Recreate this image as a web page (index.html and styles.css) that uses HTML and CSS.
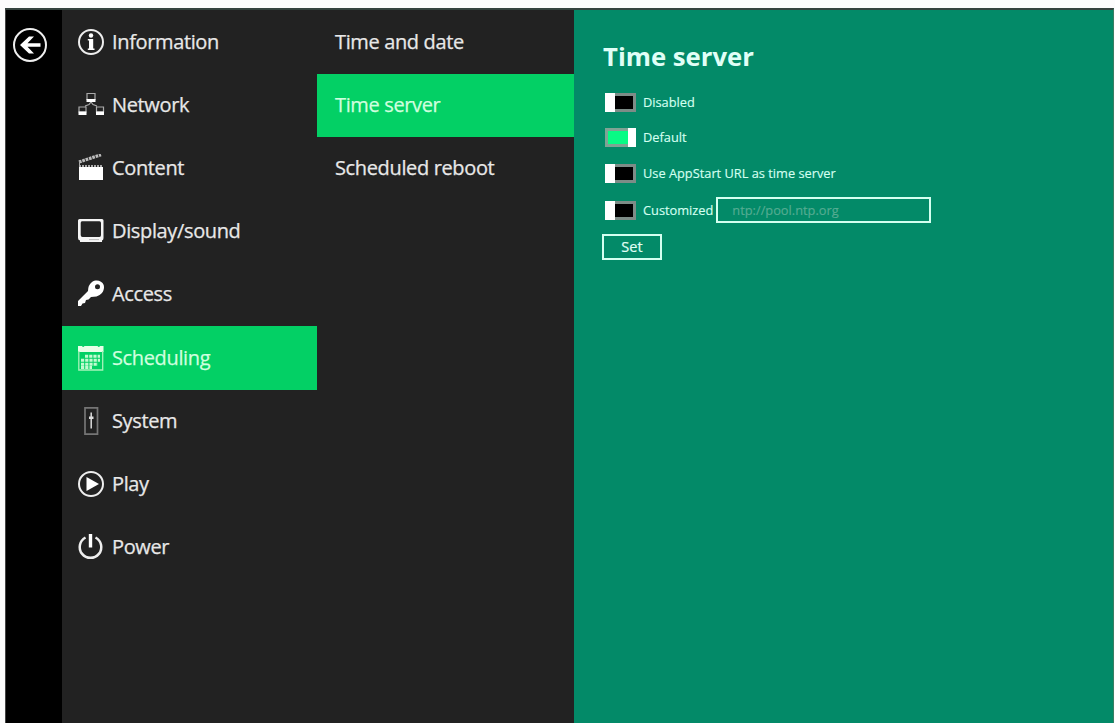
FILE: index.html
```html
<!DOCTYPE html>
<html lang="en">
<head>
<meta charset="utf-8">
<title>Time server</title>
<link rel="stylesheet" href="styles.css">
</head>
<body>
<div class="app">
  <aside class="rail">
    <svg class="back" viewBox="0 0 36 36"><circle cx="18" cy="18" r="16" fill="none" stroke="#eee" stroke-width="2"/><path d="M8 18 17 9.500H22L15.500 16.200H28.500V19.800H15.500L22 26.500H17Z" fill="#fff"/></svg>
  </aside>
  <nav class="menu">
    <a class="item"><svg class="icon" viewBox="0 0 28 28"><circle cx="14" cy="14" r="12" fill="none" stroke="#eee" stroke-width="2"/><circle cx="14" cy="7.500" r="2.200" fill="#fff"/><path d="M10.800 11H16.200V20.500H17.500V22H10.800V20.500H12V12.500H10.800Z" fill="#fff"/></svg><span>Information</span></a>
    <a class="item"><svg class="icon" viewBox="0 0 28 28"><g fill="none" stroke="#aaa" stroke-width="1.200"><path d="M10 2.500H18V8.500H10ZM2 16H9V21H2ZM19.500 16H26.500V21H19.500ZM8 15 12 13.500 14 11 16 13.500 20 15"/></g><path d="M9.500 8H18.500V11H9.500ZM1.500 20.500H9.500V24H1.500ZM19 20.500H27V24H19Z" fill="#fff"/></svg><span>Network</span></a>
    <a class="item"><svg class="icon" viewBox="0 0 28 28"><path d="M2 13H26V26H2Z" fill="#fff"/><path d="M2 12H26" stroke="#aaa" stroke-width="2" stroke-dasharray="2 1"/><path d="M2 8 24 .8" stroke="#bbb" stroke-width="3.200" stroke-dasharray="2.700 .8"/><path d="M2.500 6V12" stroke="#aaa"/></svg><span>Content</span></a>
    <a class="item"><svg class="icon" viewBox="0 0 28 28"><path fill="#f4f4f4" fill-rule="evenodd" d="M2.500 2H25Q26.500 2 26.500 3.500V21Q26.500 23 25 23.500V25H3V23.500Q1 23 1 21V3.500Q1 2 2.500 2ZM5 4.300Q3.700 4.300 3.700 6V18Q3.700 20 5.500 20H22.500Q24 20 24 18V6Q24 4.300 22.500 4.300Z"/><path d="M12 22.600H22" stroke="#aaa" stroke-width=".8"/></svg><span>Display/sound</span></a>
    <a class="item"><svg class="icon" viewBox="0 0 28 28"><path fill="#fff" fill-rule="evenodd" d="M15 2C19-.8 25 .5 26.700 5 28 10 25 15 19.500 16.500L14 17 11.500 19.500 9 20 8 23 5.500 23.500 4 26H1V21L11 11Q11 5 15 2ZM20.500 4.200A2.500 2.500 0 1 0 20.500 9.200A2.500 2.500 0 1 0 20.500 4.200Z"/></svg><span>Access</span></a>
    <a class="item active"><svg class="icon" viewBox="0 0 28 28"><path fill="#e8ffe8" d="M1 2H5Q6 4 7.500 2H20.500Q22 4 23 2H26.500V8H1Z"/><path d="M1.800 7V26H25.700V7" fill="none" stroke="#a8f3ba" stroke-width="1.300"/><path d="M8 12.200H23M4 16.200H23M4 20.200H21M4 23.600H15" stroke="#c2fbd0" stroke-width="3" stroke-dasharray="3.200 1"/></svg><span>Scheduling</span></a>
    <a class="item"><svg class="icon" viewBox="0 0 28 28"><path d="M8 .9H20.500V27.100H8Z" fill="none" stroke="#757575" stroke-width="1.700"/><path d="M14.200 5.500V21.500" stroke="#ddd" stroke-width="1.500"/><path d="M12 9.500H16.500V12H12Z" fill="#ddd"/></svg><span>System</span></a>
    <a class="item"><svg class="icon" viewBox="0 0 28 28"><circle cx="14" cy="14" r="12" fill="none" stroke="#eee" stroke-width="2"/><path d="M9.500 7 22 14 9.500 21Z" fill="#fff"/></svg><span>Play</span></a>
    <a class="item"><svg class="icon" viewBox="0 0 28 28"><path d="M8.500 4.500A10.800 10.800 0 1 0 18.500 4.500" fill="none" stroke="#eee" stroke-width="2.500"/><path d="M13.500 1V14.500" stroke="#fff" stroke-width="3.400"/></svg><span>Power</span></a>
  </nav>
  <nav class="menu submenu">
    <a class="item">Time and date</a>
    <a class="item active">Time server</a>
    <a class="item">Scheduled reboot</a>
  </nav>
  <main class="panel">
    <h1>Time server</h1>
    <div class="option"><i class="toggle"></i><span>Disabled</span></div>
    <div class="option default"><i class="toggle on"></i><span>Default</span></div>
    <div class="option appstart"><i class="toggle"></i><span>Use AppStart URL as time server</span></div>
    <div class="option custom"><i class="toggle"></i><span>Customized</span><input class="url" type="text" placeholder="ntp://pool.ntp.org"></div>
    <button class="set">Set</button>
  </main>
</div>
</body>
</html>
```
FILE: styles.css
```css
* { box-sizing: border-box; }
body {
  margin: 0;
  height: 723px;
  overflow: hidden;
  background: #fcfcfc;
  font-family: "Open Sans", "Noto Sans", sans-serif;
  color: #fff;
}
.app {
  display: flex;
  height: 715px;
  margin: 8px 1px 0 5px;
  border-top: 2px solid #35433e;
  border-left: 1px solid #444;
  border-right: 1px solid #397d63;
  background: #222;
}
.rail { width: 56px; background: #000; padding: 17px 0 0 6px; }
.back { display: block; width: 36px; height: 36px; }
.menu { width: 255px; padding-top: 1px; }
.item {
  display: flex;
  align-items: center;
  height: 63.1px;
  padding: 0 0 1px 15px;
  font-size: 20px;
  letter-spacing: -.36px;
  line-height: 28px;
  color: #e8e8e8;
  -webkit-text-stroke: .25px currentColor;
  white-space: nowrap;
}
.icon { width: 28px; height: 28px; margin-right: 7px; }
.active { background: #03d065; color: #d0ffdf; }
.submenu { width: 257px; }
.submenu .item { padding-left: 18px; }
.panel { flex: 1; background: #038a68; padding: 28px 0 0 29px; }
h1 {
  margin: 0 0 15px;
  font-size: 25.7px;
  line-height: 38px;
  font-weight: 700;
  color: #e0fff7;
}
.option {
  display: flex;
  align-items: center;
  height: 22px;
  padding-left: 2px;
  font-size: 12.8px;
  color: #d4fff0;
  -webkit-text-stroke: .15px currentColor;
  white-space: nowrap;
}
.default { margin-top: 13px; }
.appstart { margin-top: 14px; }
.custom { margin-top: 13px; height: 26px; }
.toggle {
  width: 31px;
  height: 19px;
  margin-right: 7px;
  background: #000;
  border: 3px solid #7d8c87;
  border-left: 10px solid #fff;
  border-image: linear-gradient(to right, #fff 10px, #7d8c87 10px) 3 3 3 10;
}
.toggle.on {
  background: #08fb85;
  border: 3px solid #7fa394;
  border-right: 8px solid #fff;
  border-image: linear-gradient(to right, #7fa394 23px, #fff 23px) 3 8 3 3;
}
.url {
  width: 215px;
  height: 26px;
  margin-left: 3px;
  padding: 0 0 0 14px;
  border: 2px solid #d4fff0;
  background: transparent;
  font: 12.8px "Open Sans", sans-serif;
  color: #fff;
}
.url::placeholder { color: #55ac92; opacity: 1; }
.set {
  display: block;
  width: 60px;
  height: 26px;
  margin: 11px 0 0 -1px;
  padding: 0;
  border: 2px solid #d4fff0;
  background: transparent;
  color: #e0fff5;
  font: 14.5px/20px "Open Sans", sans-serif;
  -webkit-text-stroke: .2px currentColor;
}
```
